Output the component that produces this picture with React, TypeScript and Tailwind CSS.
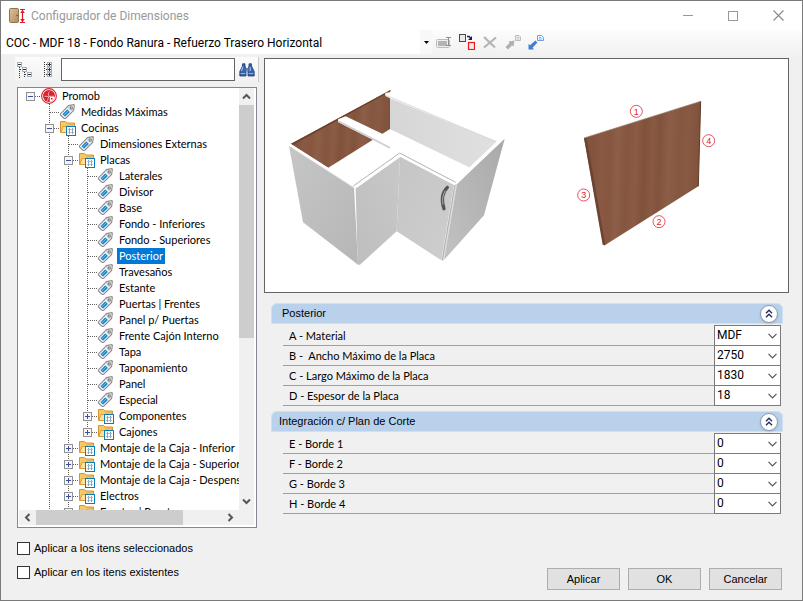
import React, { useState } from "react";

type IconKind = "promob" | "tag" | "folder";
// Guides: "." empty, "|" line, "t" tee, "-" open node, "+" closed node, "r" open root, "e" last closed node
type TreeRow = { guides: string; icon: IconKind; label: string };

const rows: TreeRow[] = [
  { guides: "r", icon: "promob", label: "Promob" },
  { guides: ".t", icon: "tag", label: "Medidas Máximas" },
  { guides: ".-", icon: "folder", label: "Cocinas" },
  { guides: ".|t", icon: "tag", label: "Dimensiones Externas" },
  { guides: ".|-", icon: "folder", label: "Placas" },
  { guides: ".||t", icon: "tag", label: "Laterales" },
  { guides: ".||t", icon: "tag", label: "Divisor" },
  { guides: ".||t", icon: "tag", label: "Base" },
  { guides: ".||t", icon: "tag", label: "Fondo - Inferiores" },
  { guides: ".||t", icon: "tag", label: "Fondo - Superiores" },
  { guides: ".||t", icon: "tag", label: "Posterior" },
  { guides: ".||t", icon: "tag", label: "Travesaños" },
  { guides: ".||t", icon: "tag", label: "Estante" },
  { guides: ".||t", icon: "tag", label: "Puertas | Frentes" },
  { guides: ".||t", icon: "tag", label: "Panel p/ Puertas" },
  { guides: ".||t", icon: "tag", label: "Frente Cajón Interno" },
  { guides: ".||t", icon: "tag", label: "Tapa" },
  { guides: ".||t", icon: "tag", label: "Taponamiento" },
  { guides: ".||t", icon: "tag", label: "Panel" },
  { guides: ".||t", icon: "tag", label: "Especial" },
  { guides: ".||+", icon: "folder", label: "Componentes" },
  { guides: ".||e", icon: "folder", label: "Cajones" },
  { guides: ".|+", icon: "folder", label: "Montaje de la Caja - Inferior" },
  { guides: ".|+", icon: "folder", label: "Montaje de la Caja - Superior" },
  { guides: ".|+", icon: "folder", label: "Montaje de la Caja - Despensa" },
  { guides: ".|+", icon: "folder", label: "Electros" },
  { guides: ".|+", icon: "folder", label: "Frentes | Puertas" },
];

function Guide({ kind }: { kind: string }) {
  const full = "|t-+".includes(kind);
  const half = kind === "e";
  const across = "t-+re".includes(kind);
  const box = "-+re".includes(kind);
  return (
    <svg width="19" height="16" viewBox="0 0 19 16" className="shrink-0" shapeRendering="crispEdges" aria-hidden="true">
      {full && <path d="M9.5 0V16" stroke="#606060" strokeDasharray="1 1" />}
      {half && <path d="M9.5 0V8" stroke="#606060" strokeDasharray="1 1" />}
      {across && <path d="M10 8.5H19" stroke="#606060" strokeDasharray="1 1" />}
      {box && (
        <>
          <rect x="5.5" y="4.5" width="8" height="8" fill="#f6f6f6" stroke="#919191" />
          <path d="M7 8.5H12" stroke="#3b4fa0" />
          {(kind === "+" || kind === "e") && <path d="M9.5 6V11" stroke="#3b4fa0" />}
        </>
      )}
    </svg>
  );
}

function NodeIcon({ kind }: { kind: IconKind }) {
  if (kind === "promob")
    return (
      <svg width="20" height="16" viewBox="0 0 20 16" className="shrink-0" aria-hidden="true">
        <circle cx="9" cy="8" r="7.4" fill="#fff" stroke="#d9232e" strokeWidth="1.1" />
        <circle cx="9" cy="8" r="6" fill="#d9232e" />
        <path d="M9.8 8.8H14.9C14.6 11.4 12.6 13.6 9.8 13.9Z" fill="#fff" />
        <path d="M9.4 3.6C8.2 4.6 8 6.6 9 8.4L14 8.2M4.4 8.2L8.8 8.6L7.4 12.6" stroke="#f7c9cc" strokeWidth="0.8" fill="none" />
        <path d="M11 10H12.6V11.6H11Z" fill="#d9232e" />
      </svg>
    );
  if (kind === "tag")
    return (
      <svg width="20" height="16" viewBox="0 0 20 16" className="shrink-0" aria-hidden="true">
        <path d="M1.5 9.9L9.6 1.6L14.8 0.6L15.4 1.2L14.6 6.4L6.5 14.5L5.2 14.5L1.5 11Z" fill="#fff" stroke="#8a8a8a" strokeWidth="1.1" />
        <path d="M10 2.4L14.2 1.6L13.8 5.8L12 7.4L8.4 4Z" fill="#dcdcdc" />
        <path d="M3.4 10.2L8.2 5.2L11 8L6 12.8Z" fill="#2388cc" />
        <path d="M4.8 11L9.6 6.4" stroke="#6bbcf0" strokeWidth="1" />
        <rect x="11.2" y="3" width="2" height="2" fill="#fff" stroke="#707070" strokeWidth="0.9" />
      </svg>
    );
  return (
    <svg width="20" height="16" viewBox="0 0 20 16" className="shrink-0" aria-hidden="true">
      <path d="M1.5 12.5V1.5H6.5L8 3H15.5V12.5Z" fill="#f5c964" stroke="#d8942c" />
      <path d="M1.8 12.5L4 6.5H8L9.5 5H15.5V12.5Z" fill="#fde3a0" stroke="#e09c38" />
      <rect x="7.5" y="6.5" width="9" height="9" fill="#fff" stroke="#0f7cba" />
      <path d="M9 9.5H15M9 12.5H15" stroke="#b4c6d2" />
      <path d="M10.5 8V14M13.5 8V14" stroke="#86a9c4" />
    </svg>
  );
}

function Chevron({ d }: { d: string }) {
  return (
    <svg width="9" height="9" viewBox="0 0 9 9" fill="none" stroke="#555" strokeWidth="2" aria-hidden="true">
      <path d={d} />
    </svg>
  );
}

function Tree() {
  const [selected, setSelected] = useState("Posterior");
  return (
    <div className="mx-0.5 mt-[5px] flex min-h-0 flex-1 flex-col border border-[#828790] bg-white pr-0.5 pb-0.5 pl-px">
      <div className="flex min-h-0 flex-1">
        <ul role="tree" aria-label="Dimensiones" className="min-w-0 flex-1 overflow-hidden pl-0.5 font-[Lato,'Liberation_Sans',sans-serif]">
          {rows.map((r) => (
            <li key={r.label} role="treeitem" aria-selected={selected === r.label} className="flex h-4">
              {r.guides.split("").map((g, i) => (
                <Guide key={i} kind={g} />
              ))}
              <NodeIcon kind={r.icon} />
              <button
                type="button"
                onClick={() => setSelected(r.label)}
                className={
                  selected === r.label
                    ? "h-4 bg-[#0078d7] px-0.5 leading-4 whitespace-nowrap text-white"
                    : "h-4 px-0.5 leading-4 whitespace-nowrap"
                }
              >
                {r.label}
              </button>
            </li>
          ))}
        </ul>
        <div className="flex w-[15px] flex-col bg-[#f0f0f0]">
          <button type="button" aria-label="Subir" className="flex h-[17px] items-center justify-center">
            <Chevron d="M1 6.5L4.5 3L8 6.5" />
          </button>
          <div className="flex-1">
            <div className="h-3/5 bg-[#cdcdcd]" />
          </div>
          <button type="button" aria-label="Bajar" className="flex h-[17px] items-center justify-center">
            <Chevron d="M1 2.5L4.5 6L8 2.5" />
          </button>
        </div>
      </div>
      <div className="flex h-[15px] bg-[#f0f0f0] pr-[15px]">
        <button type="button" aria-label="Izquierda" className="flex w-[17px] items-center justify-center">
          <Chevron d="M6.5 1L3 4.5L6.5 8" />
        </button>
        <div className="flex-1">
          <div className="h-full w-[79%] bg-[#cdcdcd]" />
        </div>
        <button type="button" aria-label="Derecha" className="flex w-[17px] items-center justify-center">
          <Chevron d="M2.5 1L6 4.5L2.5 8" />
        </button>
      </div>
    </div>
  );
}

function Preview() {
  return (
    <svg viewBox="3 3 1569 699" className="block w-full" role="img" aria-label="Vista previa del módulo">
      <defs>
        <linearGradient id="wood" x1="0" x2="1" y1="0" y2="0.04">
          <stop offset="0" stopColor="#875842" />
          <stop offset="0.08" stopColor="#81523c" />
          <stop offset="0.16" stopColor="#895943" />
          <stop offset="0.24" stopColor="#86563f" />
          <stop offset="0.3" stopColor="#8e5f48" />
          <stop offset="0.38" stopColor="#85563f" />
          <stop offset="0.46" stopColor="#8b5b44" />
          <stop offset="0.53" stopColor="#80513b" />
          <stop offset="0.6" stopColor="#895942" />
          <stop offset="0.66" stopColor="#82533c" />
          <stop offset="0.74" stopColor="#8c5d47" />
          <stop offset="0.83" stopColor="#855640" />
          <stop offset="0.9" stopColor="#895a43" />
          <stop offset="1" stopColor="#80513b" />
        </linearGradient>
        <linearGradient id="side" x1="0" x2="1" y1="0" y2="1">
          <stop offset="0" stopColor="#c6c6c6" />
          <stop offset="1" stopColor="#b6b6b6" />
        </linearGradient>
        <linearGradient id="front" x1="0" x2="1" y1="1" y2="0">
          <stop offset="0" stopColor="#bebebe" />
          <stop offset="1" stopColor="#c8c8c8" />
        </linearGradient>
        <linearGradient id="door" x1="0" x2="1" y1="0" y2="1">
          <stop offset="0" stopColor="#c5c5c5" />
          <stop offset="1" stopColor="#cecece" />
        </linearGradient>
        <linearGradient id="right" x1="1" x2="0" y1="0" y2="1">
          <stop offset="0" stopColor="#a9a9a9" />
          <stop offset="1" stopColor="#c2c2c2" />
        </linearGradient>
        <linearGradient id="inner" x1="0" x2="1" y1="0" y2="0">
          <stop offset="0" stopColor="#d6d6d6" />
          <stop offset="1" stopColor="#e0e0e0" />
        </linearGradient>
      </defs>
      <path d="M80 258L378 97V213L193 329Z" fill="url(#wood)" />
      <path d="M80 258L380 96L380 100L86 261Z" fill="#6b412e" />
      <path d="M378 117L697 250L615 328L378 213Z" fill="url(#inner)" />
      <path d="M364 105L384 101L722 241L697 251L378 121L364 114Z" fill="#fff" />
      <path d="M364 112L378 117L697 251" fill="none" stroke="#c4c4c4" strokeWidth="2" />
      <path d="M222 184L245 175L356 228L410 264L376 270L222 192Z" fill="#fff" />
      <path d="M223 187L378 266V272L223 193Z" fill="#cfcfcf" />
      <path d="M75 263L270 388L282 620L117 493Z" fill="url(#side)" />
      <path d="M72 262L80 257L276 383L270 390Z" fill="#fff" />
      <path d="M74 264L270 389" stroke="#d6d6d6" strokeWidth="2" />
      <path d="M275 391L408 297L398 520L288 620L281 620Z" fill="url(#front)" />
      <path d="M408 295L570 380L532 607L398 520Z" fill="url(#door)" />
      <path d="M570 380L579 377L540 607L532 607Z" fill="#dedede" />
      <path d="M573 380L535 607" stroke="#999" strokeWidth="2" />
      <path d="M579 377L722 242L660 472L540 606Z" fill="url(#right)" />
      <path d="M697 250L722 240L580 377L568 372Z" fill="#fff" />
      <path d="M697 250L615 328" stroke="#d0d0d0" strokeWidth="2" />
      <path d="M268 384L407 285L575 373" fill="none" stroke="#b4b4b4" strokeWidth="3" />
      <path d="M277 387L408 293L574 379" fill="none" stroke="#fff" strokeWidth="6" />
      <path d="M550 388C534 404 532 428 540 452" fill="none" stroke="#555" strokeWidth="10" strokeLinecap="round" />
      <path d="M544 398C536 410 534 424 537 440" fill="none" stroke="#aaa" strokeWidth="3" />
      <path d="M960 240L1310 130L1303 385L1020 563Z" fill="url(#wood)" />
      <path d="M960 240L968 241L1024 561L1016 560Z" fill="#6b4432" />
      <path d="M1310 130L1303 385" stroke="#5f3a29" strokeWidth="3" />
      <path d="M960 240L1310 130" stroke="#a08070" strokeWidth="2" />
      <g fill="none" stroke="#e0343c" strokeWidth="2.5">
        <circle cx="1117" cy="160" r="18" />
        <circle cx="1185" cy="491" r="18" />
        <circle cx="959" cy="411" r="18" />
        <circle cx="1334" cy="248" r="18" />
      </g>
      <g fill="#d8232c" textAnchor="middle" className="font-['Liberation_Sans',sans-serif] text-[27px]">
        <text x="1117" y="170">1</text>
        <text x="1185" y="501">2</text>
        <text x="959" y="421">3</text>
        <text x="1334" y="258">4</text>
      </g>
    </svg>
  );
}

type Field = { label: string; value: string };

function Section({ title, fields, inset }: { title: string; fields: Field[]; inset: string }) {
  return (
    <section className="mr-1.5 ml-[7px]">
      <div className="flex h-[21px] items-center justify-between rounded-t-md border border-[#cfe0f2] bg-[#b9d1ea] pr-1">
        <h2 className={inset}>{title}</h2>
        <button
          type="button"
          aria-label={"Contraer " + title}
          className="flex size-[18px] items-center justify-center rounded-full border border-[#8f9bb5] bg-white shadow-sm"
        >
          <svg width="8" height="9" viewBox="0 0 8 9" fill="none" stroke="#1f2f66" strokeWidth="1.4" aria-hidden="true">
            <path d="M1 4.3L4 1.3L7 4.3M1 8.3L4 5.3L7 8.3" />
          </svg>
        </button>
      </div>
      <div className="mt-0.5 mr-0.5 ml-3">
        {fields.map((f, i) => {
          const id = title.slice(0, 3) + i;
          return (
            <div key={f.label} className="flex h-5">
              <label htmlFor={id} className="flex-1 border-b border-[#a0a0a0] pl-1.5 font-[Lato,'Liberation_Sans',sans-serif] leading-5 whitespace-pre">
                {f.label}
              </label>
              <div className="relative -mt-px h-[21px] w-[67px]">
                <select
                  id={id}
                  defaultValue={f.value}
                  className="block h-full w-full appearance-none border border-[#7a7a7a] bg-white pb-0.5 pl-0.5 font-[Roboto,'Liberation_Sans',sans-serif] text-[12px] leading-4"
                >
                  <option>{f.value}</option>
                </select>
                <svg width="9" height="6" viewBox="0 0 9 6" fill="none" stroke="#555" strokeWidth="1.2" className="pointer-events-none absolute top-2 right-1" aria-hidden="true">
                  <path d="M0.5 0.8L4.5 4.8L8.5 0.8" />
                </svg>
              </div>
            </div>
          );
        })}
      </div>
    </section>
  );
}

function ToolButton({ label, children }: { label: string; children: React.ReactNode }) {
  return (
    <button type="button" aria-label={label}>
      <svg width="16" height="16" viewBox="0 0 16 16" fill="none" aria-hidden="true">
        {children}
      </svg>
    </button>
  );
}

function Toolbar() {
  return (
    <div className="flex h-[27px] items-start bg-linear-to-b from-[#fdfdfd] to-[#f0f0f0]">
      <div className="relative h-6 w-[431px]">
        <select
          aria-label="Configuración"
          className="block h-6 w-full appearance-none bg-white pt-0.5 pl-[5px] font-[Roboto,'Open_Sans',sans-serif] text-[12px]"
        >
          <option>COC - MDF 18 - Fondo Ranura - Refuerzo Trasero Horizontal</option>
        </select>
        <div className="pointer-events-none absolute inset-y-0 right-0 flex w-3 items-center justify-center bg-[#f8f8f8]">
          <svg width="5" height="3" viewBox="0 0 5 3" aria-hidden="true">
            <path d="M0 0H5L2.5 3Z" fill="#000" />
          </svg>
        </div>
      </div>
      <div className="flex gap-[7px] pt-1 pl-1">
        <ToolButton label="Renombrar">
          <rect x="0.5" y="5.5" width="13" height="8" rx="1" fill="#efefef" stroke="#bdbdbd" />
          <rect x="2" y="7" width="9" height="5" fill="#b4b4b4" />
          <path d="M10 3.5H15M12.5 3.5V11.5M10 11.5H15" stroke="#8f8f8f" />
        </ToolButton>
        <ToolButton label="Reemplazar">
          <rect x="0.5" y="0.5" width="6" height="7" fill="#e8e8ee" stroke="#5a4048" />
          <path d="M8 2.5H10L12 4.5" stroke="#10206e" strokeWidth="1.4" />
          <path d="M13 2V6H9Z" fill="#10206e" />
          <rect x="9.5" y="8.5" width="6" height="7" fill="#f1e8ea" stroke="#f01818" strokeWidth="1.2" />
        </ToolButton>
        <ToolButton label="Eliminar">
          <path d="M2 3L13 13.5M14 3.5L2 13.5" stroke="#b4b4b4" strokeWidth="2.2" />
        </ToolButton>
        <ToolButton label="Exportar">
          <path d="M0.5 13L4.5 9L3.5 7.5L9.5 6.5L8.5 12.5L7 11.5L3 15.5Z" fill="#b0b0b0" />
          <path d="M10.5 1.5H14L15.5 3V6.5H10.5Z" fill="#ededed" stroke="#bcbcbc" />
          <path d="M12 3.5H14M12 5H14" stroke="#bcbcbc" strokeWidth="0.8" />
        </ToolButton>
        <ToolButton label="Importar">
          <path d="M0.5 15.5V10L2 11.2L7.4 6.4L9.4 8.6L4.6 13.8L6 15.5Z" fill="#3f80d0" />
          <path d="M9.5 1.5H13.5L15.5 3.5V6.5H9.5Z" fill="#f3f8ff" stroke="#6aa0e6" />
          <path d="M11 3.5H13M11 5H14" stroke="#6aa0e6" strokeWidth="0.8" />
        </ToolButton>
      </div>
    </div>
  );
}

function TitleBar() {
  return (
    <header className="flex h-[29px] items-center bg-white pl-2">
      <svg width="17" height="16" viewBox="0 0 17 16" aria-hidden="true">
        <defs>
          <linearGradient id="door-icon" x1="0" x2="1" y1="0" y2="1">
            <stop offset="0" stopColor="#ddc29b" />
            <stop offset="1" stopColor="#b08c60" />
          </linearGradient>
        </defs>
        <rect x="0.5" y="0.5" width="9" height="14" rx="1" fill="url(#door-icon)" stroke="#94734c" />
        <circle cx="8" cy="7.5" r="0.8" fill="#6b5233" />
        <path d="M11 1.5H16M11 14.5H16M13.5 2V14" stroke="#e01828" strokeWidth="1.2" />
        <path d="M11.2 5L13.5 2L15.8 5ZM11.2 11L13.5 14L15.8 11Z" fill="#e01828" />
      </svg>
      <h1 className="flex-1 pl-[5px] font-[Roboto,'Open_Sans',sans-serif] text-[12px] text-[#999]">
        Configurador de Dimensiones
      </h1>
      <div className="flex w-[119px] justify-between pr-[18px]">
        <button type="button" aria-label="Minimizar">
          <svg width="10" height="11" viewBox="0 0 10 11" aria-hidden="true"><path d="M0 5.5H10" stroke="#999" /></svg>
        </button>
        <button type="button" aria-label="Maximizar">
          <svg width="10" height="10" viewBox="0 0 10 10" aria-hidden="true"><rect x="0.5" y="0.5" width="9" height="9" fill="none" stroke="#999" /></svg>
        </button>
        <button type="button" aria-label="Cerrar">
          <svg width="11" height="11" viewBox="0 0 11 11" aria-hidden="true"><path d="M0.5 0.5L10.5 10.5M10.5 0.5L0.5 10.5" stroke="#888" strokeWidth="1.1" /></svg>
        </button>
      </div>
    </header>
  );
}

function SearchBar() {
  return (
    <div className="flex h-[25px] items-center border-r border-[#c8c8c8] bg-linear-to-b from-[#fbfbfb] to-[#f2f2f2] pr-[3px] pl-0.5">
      <button type="button" aria-label="Contraer todo" className="w-[26px]">
        <svg width="16" height="16" viewBox="0 0 16 16" fill="none" shapeRendering="crispEdges" aria-hidden="true">
          <path d="M2.5 5V16M7.5 10V16M3 7.5H5M8 12.5H10" stroke="#333" strokeDasharray="1 1" />
          <rect x="0.5" y="0.5" width="4" height="4" fill="#fff" stroke="#a3b0bd" />
          <rect x="5.5" y="5.5" width="4" height="4" fill="#fff" stroke="#a3b0bd" />
          <rect x="10.5" y="10.5" width="4" height="4" fill="#fff" stroke="#a3b0bd" />
          <path d="M1 2.5H4M6 7.5H9M11 12.5H14" stroke="#333" />
        </svg>
      </button>
      <button type="button" aria-label="Expandir todo" className="w-[18px]">
        <svg width="10" height="16" viewBox="0 0 10 16" fill="none" shapeRendering="crispEdges" aria-hidden="true">
          <path d="M1.5 0V16" stroke="#333" strokeDasharray="1 1" />
          <path d="M3 2.5H4M3 7.5H4M3 12.5H4" stroke="#333" />
          <rect x="4.5" y="0.5" width="4" height="4" fill="#fff" stroke="#a3b0bd" />
          <rect x="4.5" y="5.5" width="4" height="4" fill="#fff" stroke="#a3b0bd" />
          <rect x="4.5" y="10.5" width="4" height="4" fill="#fff" stroke="#a3b0bd" />
          <path d="M5 2.5H8M5 7.5H8M5 12.5H8M6.5 1V4M6.5 6V9M6.5 11V14" stroke="#333" />
        </svg>
      </button>
      <input type="text" aria-label="Buscar" className="h-[23px] min-w-0 flex-1 border border-[#646464] bg-white px-1" />
      <button type="button" aria-label="Buscar dimensión" className="ml-1">
        <svg width="16" height="14" viewBox="0 0 16 14" aria-hidden="true">
          <path d="M3.5 0.8H6V3L7 5.5V13H0.8V8.5L3.5 3ZM10 0.8H12.5V3L15.2 8.5V13H9V5.5L10 3Z" fill="#3a62a4" stroke="#1e3f78" strokeWidth="0.8" />
          <rect x="6.5" y="5" width="3" height="3.5" fill="#5a86c8" />
          <path d="M4 4L2.4 8M11.2 4V8" stroke="#9fc0ee" strokeWidth="1.2" />
          <path d="M1.6 10.5H6.4M9.6 10.5H14.4" stroke="#8fb2e6" strokeWidth="1.2" />
        </svg>
      </button>
    </div>
  );
}

const buttonClass = "h-[22px] w-[73px] border border-[#adadad] bg-[#e1e1e1] leading-5";

export default function App() {
  return (
    <div className="flex h-screen flex-col border border-[#7a7a7a] bg-[#f0f0f0] font-['Liberation_Sans',Arial,sans-serif] text-[11px] text-black">
      <TitleBar />
      <Toolbar />
      <main className="flex min-h-0 flex-1 gap-[5px] pr-[13px] pl-[14px]">
        <div className="flex w-[244px] shrink-0 flex-col">
          <SearchBar />
          <Tree />
          <div className="flex flex-col gap-2 px-0.5 pt-3 pb-5">
            {["Aplicar a los itens seleccionados", "Aplicar en los itens existentes"].map((t) => (
              <label key={t} className="flex h-4 items-center gap-1">
                <input type="checkbox" className="size-[13px] appearance-none border border-[#333] bg-white checked:bg-[#333]" />
                {t}
              </label>
            ))}
          </div>
        </div>
        <div className="flex min-w-0 flex-1 flex-col">
          <div className="mt-px border border-[#646464] bg-white">
            <Preview />
          </div>
          <div className="mt-2.5 flex flex-col gap-[5px]">
            <Section
              title="Posterior"
              inset="pl-2.5"
              fields={[
                { label: "A - Material", value: "MDF" },
                { label: "B -  Ancho Máximo de la Placa", value: "2750" },
                { label: "C - Largo Máximo de la Placa", value: "1830" },
                { label: "D - Espesor de la Placa", value: "18" },
              ]}
            />
            <Section
              title="Integración c/ Plan de Corte"
              inset="pl-[7px]"
              fields={[
                { label: "E - Borde 1", value: "0" },
                { label: "F - Borde 2", value: "0" },
                { label: "G - Borde 3", value: "0" },
                { label: "H - Borde 4", value: "0" },
              ]}
            />
          </div>
          <div className="mt-auto flex justify-end gap-2 pr-[7px] pb-2.5">
            <button type="button" className={buttonClass}>Aplicar</button>
            <button type="button" className={buttonClass}>OK</button>
            <button type="button" className={buttonClass}>Cancelar</button>
          </div>
        </div>
      </main>
    </div>
  );
}
